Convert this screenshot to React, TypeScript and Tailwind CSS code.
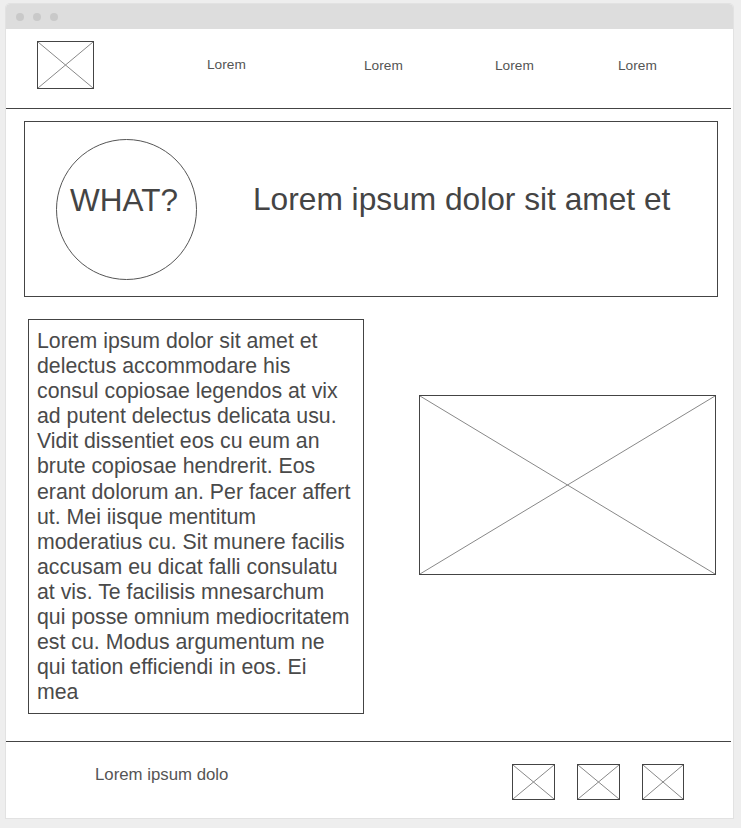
const FONT = { fontFamily: '"Liberation Sans", Arial, sans-serif' };

const BODY =
  "Lorem ipsum dolor sit amet et delectus accommodare his consul copiosae legendos at vix ad putent delectus delicata usu. Vidit dissentiet eos cu eum an brute copiosae hendrerit. Eos erant dolorum an. Per facer affert ut. Mei iisque mentitum moderatius cu. Sit munere facilis accusam eu dicat falli consulatu at vis. Te facilisis mnesarchum qui posse omnium mediocritatem est cu. Modus argumentum ne qui tation efficiendi in eos. Ei mea";

// image placeholder: box with a cross
function Placeholder({ className }: { className: string }) {
  return (
    <div className={`relative border border-[#444] ${className}`}>
      <svg className="absolute inset-0 h-full w-full" preserveAspectRatio="none" viewBox="0 0 100 100">
        <line x1="0" y1="0" x2="100" y2="100" stroke="#888" strokeWidth="1" vectorEffect="non-scaling-stroke" />
        <line x1="100" y1="0" x2="0" y2="100" stroke="#888" strokeWidth="1" vectorEffect="non-scaling-stroke" />
      </svg>
    </div>
  );
}

export default function App() {
  return (
    <div className="h-[828px] w-[741px] bg-[#eeeeee] pl-[6px] pt-[4px]" style={FONT}>
      <div className="flex h-[814px] w-[727px] flex-col overflow-hidden rounded-t-[4px] bg-white shadow-[0_0_0_1px_#e2e2e2]">
        {/* window bar */}
        <div className="flex h-[25px] shrink-0 items-center gap-[9px] bg-[#dddddd] pl-[10px]">
          <span className="h-[8px] w-[8px] rounded-full bg-[#c9c9c9]" />
          <span className="h-[8px] w-[8px] rounded-full bg-[#c9c9c9]" />
          <span className="h-[8px] w-[8px] rounded-full bg-[#c9c9c9]" />
        </div>

        {/* header */}
        <div className="relative mr-[2px] h-[80px] shrink-0 border-b border-[#444]">
          <Placeholder className="absolute left-[31px] top-[12px] h-[48px] w-[57px]" />
          <span className="absolute left-[201px] top-[26px] text-[13.7px] text-[#555]">Lorem</span>
          <span className="absolute left-[358px] top-[27px] text-[13.7px] text-[#555]">Lorem</span>
          <span className="absolute left-[489px] top-[27px] text-[13.7px] text-[#555]">Lorem</span>
          <span className="absolute left-[612px] top-[27px] text-[13.7px] text-[#555]">Lorem</span>
        </div>

        {/* hero */}
        <div className="ml-[18px] mt-[12px] flex h-[176px] w-[694px] items-center border border-[#444]">
          <div className="ml-[31px] flex h-[141px] w-[141px] items-center justify-center rounded-full border border-[#555] pb-[17px] pr-[5px]">
            <span className="text-[31.5px] text-[#444]">WHAT?</span>
          </div>
          <div className="ml-[56px] pb-[18px] text-[31.7px] text-[#444]">Lorem ipsum dolor sit amet et</div>
        </div>

        {/* content */}
        <div className="mt-[22px] flex items-start">
          <div className="ml-[22px] h-[395px] w-[336px] border border-[#444] pl-[8px] pr-[11px] pt-[9px] text-[21.3px] leading-[25.1px] text-[#4a4a4a]">
            {BODY}
          </div>
          <Placeholder className="ml-[55px] mt-[76px] h-[180px] w-[297px]" />
        </div>

        {/* footer */}
        <div className="mr-[2px] mt-[27px] flex h-[76px] items-start border-t border-[#444]">
          <span className="ml-[89px] mt-[20px] text-[16.8px] text-[#555]">Lorem ipsum dolo</span>
          <div className="ml-auto mr-[47px] mt-[22px] flex gap-[22px]">
            <Placeholder className="h-[36px] w-[43px]" />
            <Placeholder className="h-[36px] w-[43px]" />
            <Placeholder className="h-[36px] w-[42px]" />
          </div>
        </div>
      </div>
    </div>
  );
}
